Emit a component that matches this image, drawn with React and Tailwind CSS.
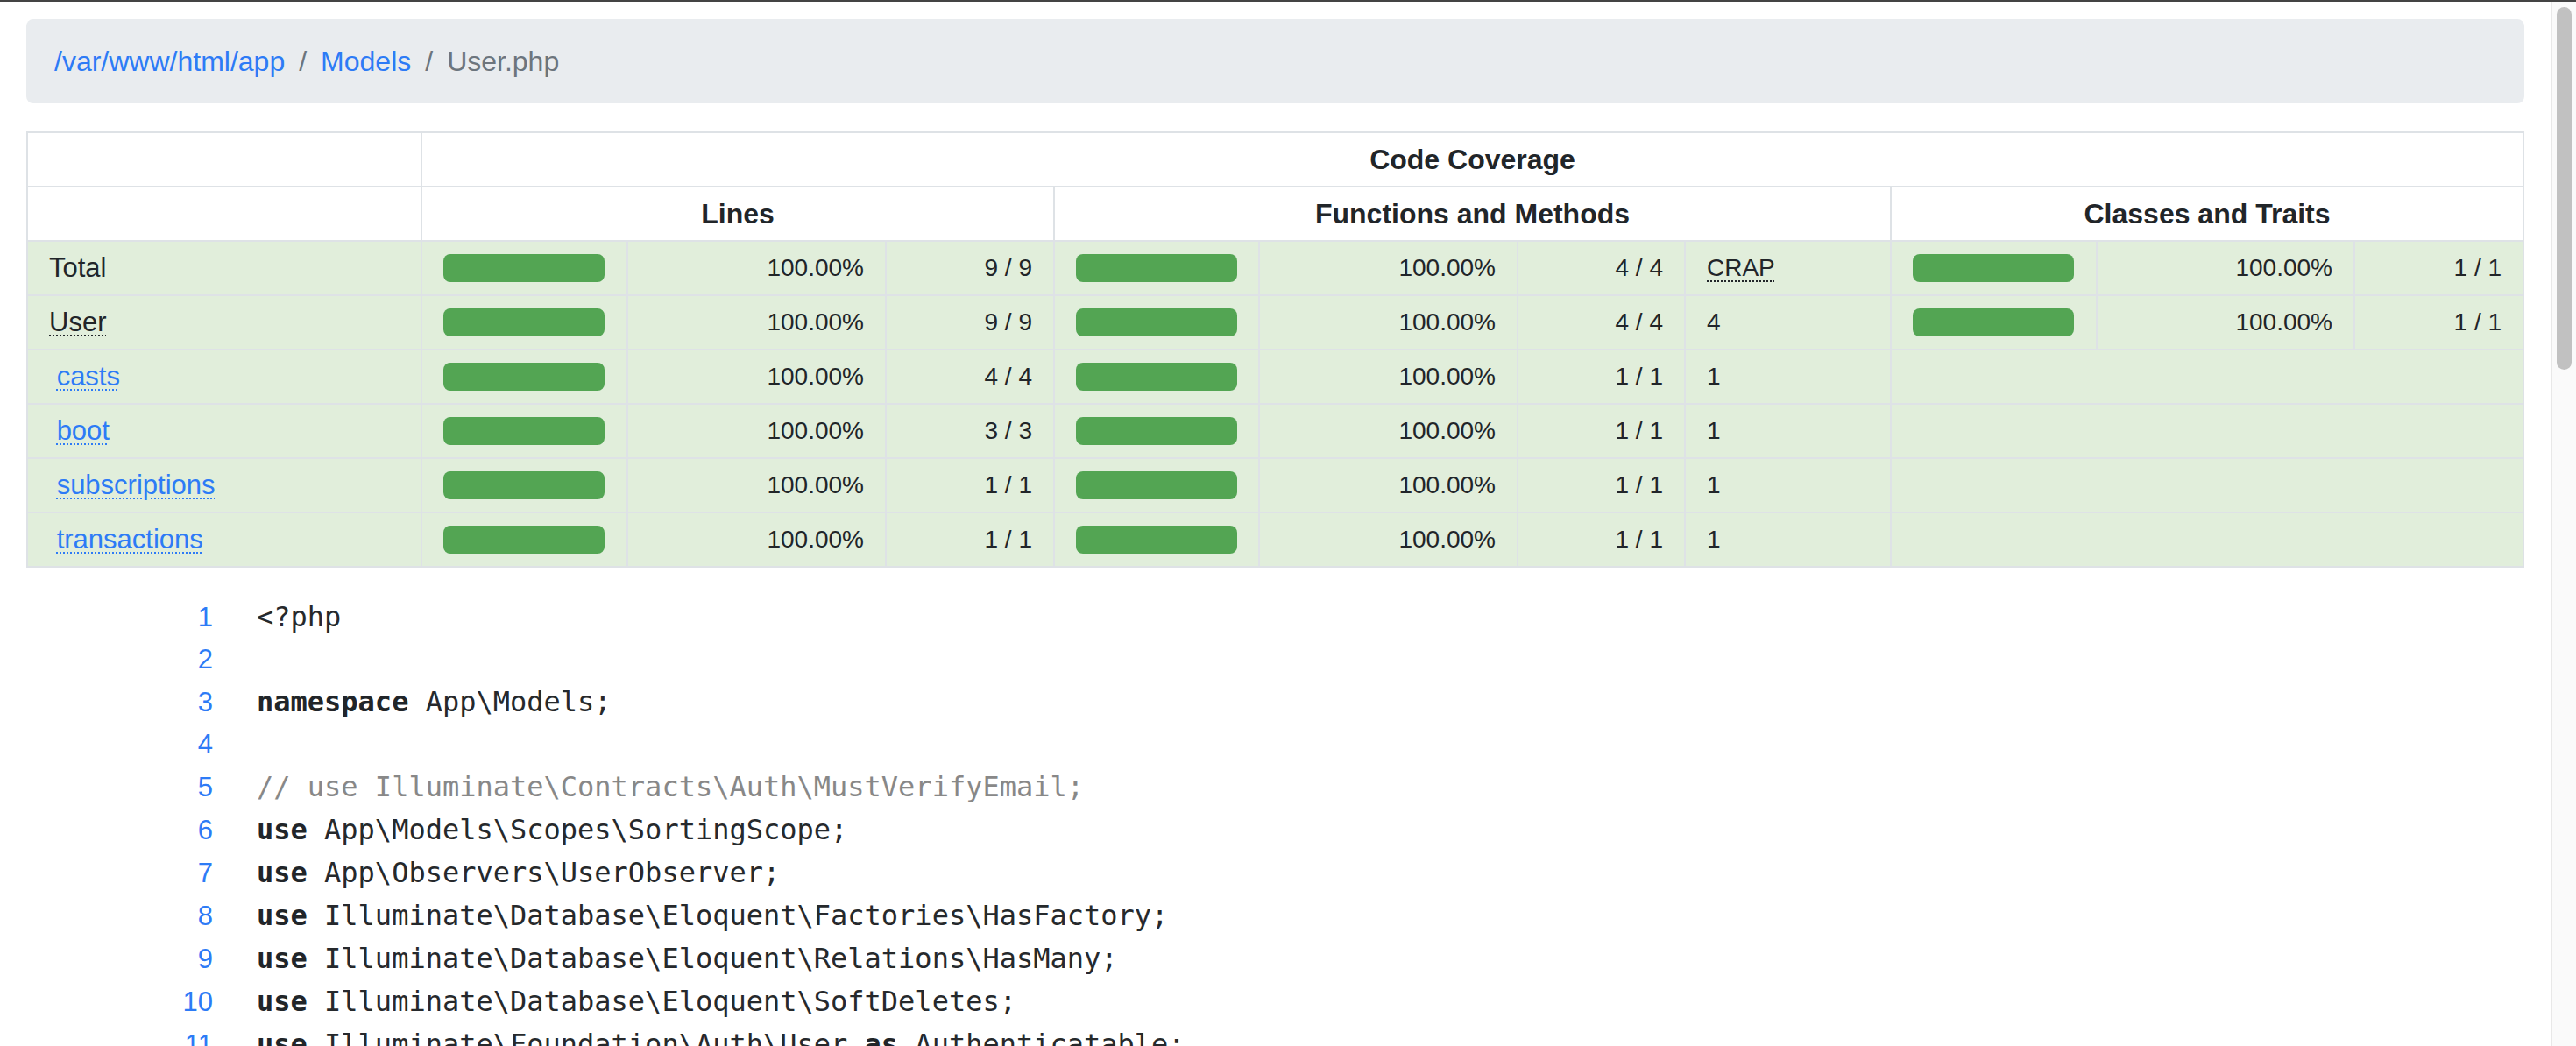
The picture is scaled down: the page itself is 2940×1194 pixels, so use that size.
import React from 'react';

const cols = [450, 235, 295, 192, 234, 295, 191, 235, 235, 294, 193];

const rows = [
  { name: 'Total', kind: 'plain', lines: '9 / 9', funcs: '4 / 4', crap: 'CRAP', classes: '1 / 1' },
  { name: 'User', kind: 'abbr', lines: '9 / 9', funcs: '4 / 4', crap: '4', classes: '1 / 1' },
  { name: 'casts', kind: 'link', lines: '4 / 4', funcs: '1 / 1', crap: '1' },
  { name: 'boot', kind: 'link', lines: '3 / 3', funcs: '1 / 1', crap: '1' },
  { name: 'subscriptions', kind: 'link', lines: '1 / 1', funcs: '1 / 1', crap: '1' },
  { name: 'transactions', kind: 'link', lines: '1 / 1', funcs: '1 / 1', crap: '1' },
];

const code = [
  [{ t: '<?php' }],
  [],
  [{ t: 'namespace', k: true }, { t: ' App\\Models;' }],
  [],
  [{ t: '// use Illuminate\\Contracts\\Auth\\MustVerifyEmail;', c: true }],
  [{ t: 'use', k: true }, { t: ' App\\Models\\Scopes\\SortingScope;' }],
  [{ t: 'use', k: true }, { t: ' App\\Observers\\UserObserver;' }],
  [{ t: 'use', k: true }, { t: ' Illuminate\\Database\\Eloquent\\Factories\\HasFactory;' }],
  [{ t: 'use', k: true }, { t: ' Illuminate\\Database\\Eloquent\\Relations\\HasMany;' }],
  [{ t: 'use', k: true }, { t: ' Illuminate\\Database\\Eloquent\\SoftDeletes;' }],
  [{ t: 'use', k: true }, { t: ' Illuminate\\Foundation\\Auth\\User ' }, { t: 'as', k: true }, { t: ' Authenticatable;' }],
  [{ t: 'use', k: true }, { t: ' Illuminate\\Notifications\\Notifiable;' }],
  [{ t: 'use', k: true }, { t: ' Laravel\\Sanctum\\HasApiTokens;' }],
];

const td = 'border-2 border-[#dee2e6] px-[24px] text-[28px] text-[#212529]';

const Bar = () => (
  <td className={td}>
    <div className="h-[32px] w-[184px] rounded-[8px] bg-[#53a553]" />
  </td>
);

const Name = ({ row }) => {
  if (row.kind === 'link') {
    return (
      <>
        {'\u00a0'}
        <a href="#" className="text-[#2d7bf6] underline decoration-dotted decoration-2 underline-offset-[5px]">
          {row.name}
        </a>
      </>
    );
  }
  if (row.kind === 'abbr') {
    return <span className="underline decoration-dotted decoration-2 underline-offset-[5px]">{row.name}</span>;
  }
  return row.name;
};

export default function App() {
  return (
    <div className="flex h-screen w-full flex-col overflow-hidden bg-white font-['Liberation_Sans',Arial,sans-serif] text-[#212529]">
      <div className="h-[2px] w-full bg-[#444444]" />
      <div className="flex min-h-0 flex-1">
        <main className="min-w-0 flex-1 overflow-hidden px-[30px] pt-[20px]">
          <nav className="flex h-[96px] items-center rounded-[8px] bg-[#e9ecef] px-[32px] text-[32px] leading-[48px]">
            <a href="#" className="text-[#2d7bf6]">/var/www/html/app</a>
            <span className="px-[16px] text-[#6c757d]">/</span>
            <a href="#" className="text-[#2d7bf6]">Models</a>
            <span className="px-[16px] text-[#6c757d]">/</span>
            <span className="text-[#6c757d]">User.php</span>
          </nav>

          <table className="mt-[32px] w-full table-fixed border-collapse">
            <colgroup>
              {cols.map((w, i) => (
                <col key={i} style={{ width: w }} />
              ))}
            </colgroup>
            <thead>
              <tr className="h-[62px]">
                <td className="border-2 border-[#dee2e6]" />
                <th colSpan={10} className="border-2 border-[#dee2e6] text-center text-[32px] font-bold">
                  Code Coverage
                </th>
              </tr>
              <tr className="h-[62px]">
                <td className="border-2 border-[#dee2e6]" />
                <th colSpan={3} className="border-2 border-[#dee2e6] text-center text-[32px] font-bold">Lines</th>
                <th colSpan={4} className="border-2 border-[#dee2e6] text-center text-[32px] font-bold">
                  Functions and Methods
                </th>
                <th colSpan={3} className="border-2 border-[#dee2e6] text-center text-[32px] font-bold">
                  Classes and Traits
                </th>
              </tr>
            </thead>
            <tbody>
              {rows.map((row) => (
                <tr key={row.name} className="h-[62px] bg-[#e1eedb]">
                  <td className={`${td} text-[31px]`}>
                    <Name row={row} />
                  </td>
                  <Bar />
                  <td className={`${td} text-right`}>100.00%</td>
                  <td className={`${td} text-right`}>{row.lines}</td>
                  <Bar />
                  <td className={`${td} text-right`}>100.00%</td>
                  <td className={`${td} text-right`}>{row.funcs}</td>
                  <td className={td}>
                    {row.crap === 'CRAP' ? (
                      <span className="underline decoration-dotted decoration-2 underline-offset-[5px]">CRAP</span>
                    ) : (
                      row.crap
                    )}
                  </td>
                  {row.classes ? (
                    <>
                      <Bar />
                      <td className={`${td} text-right`}>100.00%</td>
                      <td className={`${td} text-right`}>{row.classes}</td>
                    </>
                  ) : (
                    <td colSpan={3} className={td} />
                  )}
                </tr>
              ))}
            </tbody>
          </table>

          <div className="mt-[32px] flex flex-col">
            {code.map((tokens, i) => (
              <div key={i} className="flex items-baseline">
                <a href="#" className="w-[213px] shrink-0 text-right text-[31px] leading-[48px] text-[#2d7bf6]">
                  {i + 1}
                </a>
                <span className="ml-[50px] whitespace-pre font-['DejaVu_Sans_Mono',monospace] text-[32px] leading-[48px] text-[#26292c]">
                  {tokens.map((tok, j) => (
                    <span
                      key={j}
                      className={tok.k ? 'font-bold text-[#212529]' : tok.c ? 'text-[#888888]' : ''}
                    >
                      {tok.t}
                    </span>
                  ))}
                </span>
              </div>
            ))}
          </div>
        </main>

        <aside className="w-[29px] shrink-0 border-l-2 border-[#e8e8e8] bg-[#fafafa] pt-[6px]">
          <div className="mx-auto h-[414px] w-[17px] rounded-full bg-[#c1c1c1]" />
        </aside>
      </div>
    </div>
  );
}
